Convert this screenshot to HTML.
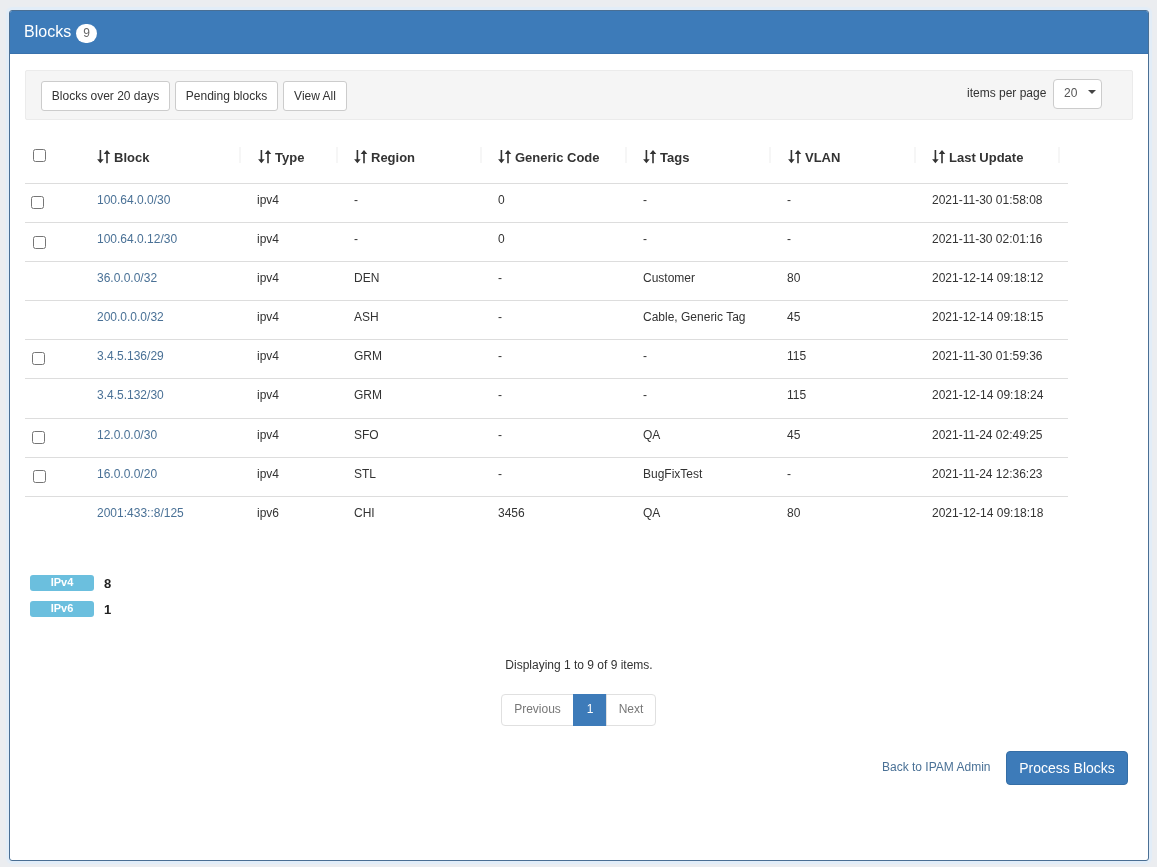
<!DOCTYPE html>
<html lang="en">
<head>
<meta charset="utf-8">
<title>Blocks</title>
<style>
*{box-sizing:border-box}
html,body{margin:0;padding:0}
body{width:1157px;height:867px;overflow:hidden;background:#ebedf0;font-family:"Liberation Sans",Arial,sans-serif;font-size:12px;color:#333;position:relative}
a{color:#4a7196;text-decoration:none}
.panel{will-change:transform;position:absolute;left:9px;top:10px;width:1140px;height:851px;background:#fff;border:1px solid #4a6f94;border-radius:3px;box-shadow:0 0 1px 3px #e2edf8}
.heading{position:absolute;left:0;top:0;width:1138px;height:43px;background:#3d7bb9;border-bottom:1px solid #3972ad;border-radius:2px 2px 0 0;color:#fff;font-size:16px}
.heading .t{position:absolute;left:14px;top:12px;line-height:18px}
.badge{position:absolute;left:66px;top:13px;width:21px;height:19px;border-radius:10px;background:#fff;color:#666;font-size:12px;line-height:19px;text-align:center}
.toolbar{position:absolute;left:15px;top:59px;width:1108px;height:50px;background:#f5f5f5;border:1px solid #ebebeb;border-radius:2px}
.btn{position:absolute;top:10px;height:30px;border:1px solid #ccc;border-radius:3px;background:#fff;font-size:12px;line-height:18px;padding:5px 0;text-align:center;color:#333}
.ipp{position:absolute;left:941px;top:13px;line-height:18px}
.sel{position:absolute;left:1027px;top:8px;width:49px;height:30px;border:1px solid #ccc;border-radius:4px;background:#fff}
.sel span{position:absolute;left:10px;top:4px;line-height:18px;color:#555}
.sel i{position:absolute;left:34px;top:10px;width:0;height:0;border-left:4px solid transparent;border-right:4px solid transparent;border-top:4px solid #444}
.cb{position:absolute;width:13px;height:13px;border:1px solid #767676;border-radius:2.5px;background:#fff}
.th{position:absolute;top:138px;font-weight:bold;font-size:13px;line-height:18px;color:#333;white-space:nowrap}
.th svg{position:absolute;left:0;top:1px}
.th span{margin-left:17px}
.sep{position:absolute;top:136px;width:2px;height:16px;background:#f6f6f6}
.line{position:absolute;left:15px;width:1043px;height:1px;background:#ddd}
.row{position:absolute;left:0;height:17px;line-height:17px;width:1100px}
.row span,.row a{position:absolute;top:0;white-space:nowrap}
.c1{left:87px}.c2{left:247px}.c3{left:344px}.c4{left:488px}.c5{left:633px}.c6{left:777px}.c7{left:922px}
.lbl{position:absolute;left:20px;width:64px;height:16px;background:#6bbfde;border-radius:3px;color:#fff;font-weight:bold;font-size:11px;line-height:14px;text-align:center}
.cnt{position:absolute;left:94px;font-weight:bold;font-size:13px;line-height:17px;color:#222}
.disp{position:absolute;left:0;width:1138px;top:646px;text-align:center;line-height:17px}
.pg{position:absolute;top:683px;height:32px;border:1px solid #e0e0e0;background:#fff;color:#777;line-height:17px;padding:6px 0;text-align:center}
.back{position:absolute;left:872px;top:748px;line-height:17px}
.proc{position:absolute;left:996px;top:740px;width:122px;height:34px;background:#3d7bb9;border:1px solid #356ea6;border-radius:4px;color:#fff;font-size:14px;line-height:20px;padding:6px 0;text-align:center}
</style>
</head>
<body>
<div class="panel">
  <div class="heading"><div class="t">Blocks</div><div class="badge">9</div></div>
  <div class="toolbar">
    <div class="btn" style="left:15px;width:129px">Blocks over 20 days</div>
    <div class="btn" style="left:149px;width:103px">Pending blocks</div>
    <div class="btn" style="left:257px;width:64px">View All</div>
    <div class="ipp">items per page</div>
    <div class="sel"><span>20</span><i></i></div>
  </div>

  <div class="cb" style="left:23px;top:138px"></div>
  <div class="th" style="left:87px"><svg width="14" height="14" viewBox="0 0 14 14"><path d="M2.6 0h1.6v9.2h2.5L3.4 13.2 0.1 9.2h2.5zM9.2 13.2h1.6V4h2.5L10 0 6.7 4h2.5z" fill="#333"/></svg><span>Block</span></div>
  <div class="th" style="left:248px"><svg width="14" height="14" viewBox="0 0 14 14"><path d="M2.6 0h1.6v9.2h2.5L3.4 13.2 0.1 9.2h2.5zM9.2 13.2h1.6V4h2.5L10 0 6.7 4h2.5z" fill="#333"/></svg><span>Type</span></div>
  <div class="th" style="left:344px"><svg width="14" height="14" viewBox="0 0 14 14"><path d="M2.6 0h1.6v9.2h2.5L3.4 13.2 0.1 9.2h2.5zM9.2 13.2h1.6V4h2.5L10 0 6.7 4h2.5z" fill="#333"/></svg><span>Region</span></div>
  <div class="th" style="left:488px"><svg width="14" height="14" viewBox="0 0 14 14"><path d="M2.6 0h1.6v9.2h2.5L3.4 13.2 0.1 9.2h2.5zM9.2 13.2h1.6V4h2.5L10 0 6.7 4h2.5z" fill="#333"/></svg><span>Generic Code</span></div>
  <div class="th" style="left:633px"><svg width="14" height="14" viewBox="0 0 14 14"><path d="M2.6 0h1.6v9.2h2.5L3.4 13.2 0.1 9.2h2.5zM9.2 13.2h1.6V4h2.5L10 0 6.7 4h2.5z" fill="#333"/></svg><span>Tags</span></div>
  <div class="th" style="left:778px"><svg width="14" height="14" viewBox="0 0 14 14"><path d="M2.6 0h1.6v9.2h2.5L3.4 13.2 0.1 9.2h2.5zM9.2 13.2h1.6V4h2.5L10 0 6.7 4h2.5z" fill="#333"/></svg><span>VLAN</span></div>
  <div class="th" style="left:922px"><svg width="14" height="14" viewBox="0 0 14 14"><path d="M2.6 0h1.6v9.2h2.5L3.4 13.2 0.1 9.2h2.5zM9.2 13.2h1.6V4h2.5L10 0 6.7 4h2.5z" fill="#333"/></svg><span>Last Update</span></div>
  <div class="sep" style="left:229px"></div><div class="sep" style="left:326px"></div><div class="sep" style="left:470px"></div><div class="sep" style="left:615px"></div><div class="sep" style="left:759px"></div><div class="sep" style="left:904px"></div><div class="sep" style="left:1048px"></div>

  <div class="line" style="top:172px"></div>
  <div class="line" style="top:211px"></div>
  <div class="line" style="top:250px"></div>
  <div class="line" style="top:289px"></div>
  <div class="line" style="top:328px"></div>
  <div class="line" style="top:367px"></div>
  <div class="line" style="top:407px"></div>
  <div class="line" style="top:446px"></div>
  <div class="line" style="top:485px"></div>

  <div class="cb" style="left:21px;top:185px"></div>
  <div class="cb" style="left:23px;top:225px"></div>
  <div class="cb" style="left:22px;top:341px"></div>
  <div class="cb" style="left:22px;top:420px"></div>
  <div class="cb" style="left:23px;top:459px"></div>

  <div class="row" style="top:181px"><a class="c1">100.64.0.0/30</a><span class="c2">ipv4</span><span class="c3">-</span><span class="c4">0</span><span class="c5">-</span><span class="c6">-</span><span class="c7">2021-11-30 01:58:08</span></div>
  <div class="row" style="top:220px"><a class="c1">100.64.0.12/30</a><span class="c2">ipv4</span><span class="c3">-</span><span class="c4">0</span><span class="c5">-</span><span class="c6">-</span><span class="c7">2021-11-30 02:01:16</span></div>
  <div class="row" style="top:259px"><a class="c1">36.0.0.0/32</a><span class="c2">ipv4</span><span class="c3">DEN</span><span class="c4">-</span><span class="c5">Customer</span><span class="c6">80</span><span class="c7">2021-12-14 09:18:12</span></div>
  <div class="row" style="top:298px"><a class="c1">200.0.0.0/32</a><span class="c2">ipv4</span><span class="c3">ASH</span><span class="c4">-</span><span class="c5">Cable, Generic Tag</span><span class="c6">45</span><span class="c7">2021-12-14 09:18:15</span></div>
  <div class="row" style="top:337px"><a class="c1">3.4.5.136/29</a><span class="c2">ipv4</span><span class="c3">GRM</span><span class="c4">-</span><span class="c5">-</span><span class="c6">115</span><span class="c7">2021-11-30 01:59:36</span></div>
  <div class="row" style="top:376px"><a class="c1">3.4.5.132/30</a><span class="c2">ipv4</span><span class="c3">GRM</span><span class="c4">-</span><span class="c5">-</span><span class="c6">115</span><span class="c7">2021-12-14 09:18:24</span></div>
  <div class="row" style="top:416px"><a class="c1">12.0.0.0/30</a><span class="c2">ipv4</span><span class="c3">SFO</span><span class="c4">-</span><span class="c5">QA</span><span class="c6">45</span><span class="c7">2021-11-24 02:49:25</span></div>
  <div class="row" style="top:455px"><a class="c1">16.0.0.0/20</a><span class="c2">ipv4</span><span class="c3">STL</span><span class="c4">-</span><span class="c5">BugFixTest</span><span class="c6">-</span><span class="c7">2021-11-24 12:36:23</span></div>
  <div class="row" style="top:494px"><a class="c1">2001:433::8/125</a><span class="c2">ipv6</span><span class="c3">CHI</span><span class="c4">3456</span><span class="c5">QA</span><span class="c6">80</span><span class="c7">2021-12-14 09:18:18</span></div>

  <div class="lbl" style="top:564px">IPv4</div><div class="cnt" style="top:564px">8</div>
  <div class="lbl" style="top:590px">IPv6</div><div class="cnt" style="top:590px">1</div>

  <div class="disp">Displaying 1 to 9 of 9 items.</div>
  <div class="pg" style="left:491px;width:73px;border-radius:4px 0 0 4px">Previous</div>
  <div class="pg" style="left:563px;width:34px;background:#3d7bb9;border-color:#3d7bb9;color:#fff">1</div>
  <div class="pg" style="left:596px;width:50px;border-radius:0 4px 4px 0">Next</div>

  <a class="back">Back to IPAM Admin</a>
  <div class="proc">Process Blocks</div>
</div>
</body>
</html>
